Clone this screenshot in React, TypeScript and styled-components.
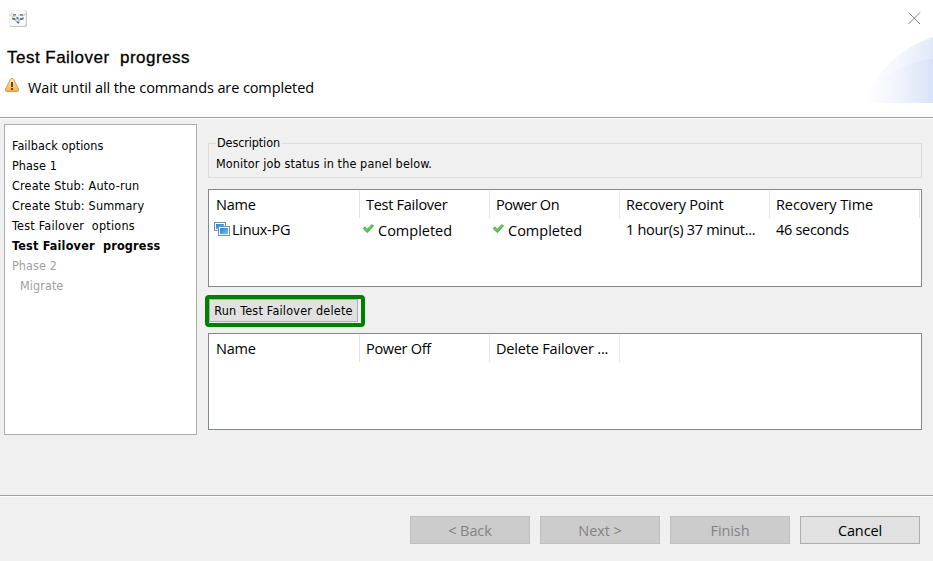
import React from 'react';
import styled, { createGlobalStyle } from 'styled-components';

const ui = '"Open Sans", "Noto Sans", sans-serif';
const dialog = '"DejaVu Sans Condensed", "DejaVu Sans", sans-serif';

const GlobalStyle = createGlobalStyle`
  * { box-sizing: border-box; }
  body { margin: 0; background: #f0f0f0; }
`;

const Window = styled.div`
  width: 933px;
  height: 561px;
  display: flex;
  flex-direction: column;
  background: #f0f0f0;
  color: #000;
  overflow: hidden;
  white-space: pre;
`;

const Header = styled.header`
  position: relative;
  height: 117px;
  background: #fff;
  display: flex;
  flex-direction: column;
`;

const TitleBar = styled.div`
  height: 36px;
  padding: 10px 12px 0 9px;
  display: flex;
  justify-content: space-between;
  svg { display: block; }
`;

const Title = styled.h1`
  margin: 11px 0 0 7px;
  font: 400 17px/22px "Liberation Sans", Arial, sans-serif;
  letter-spacing: 0.48px;
  -webkit-text-stroke: 0.3px #000;
`;

const Message = styled.div`
  display: flex;
  margin: 8px 0 0 5px;
  font: 14.5px/22px ${ui};
  letter-spacing: -0.1px;
  svg { display: block; margin: 1px 9px 0 0; }
`;

const Banner = styled.svg`
  position: absolute;
  right: 0;
  top: 36px;
`;

const Rule = styled.div`
  height: 2px;
  flex: none;
  background: #fff;
  border-top: 1px solid #a0a0a0;
`;

const Body = styled.main`
  height: 376px;
  padding: 5px 11px 0 4px;
  display: flex;
  gap: 11px;
`;

const Steps = styled.ul`
  width: 193px;
  height: 311px;
  margin: 0;
  padding: 11px 7px;
  list-style: none;
  background: #fff;
  border: 1px solid #abadb3;
  font: 12.5px/20px ${dialog};
`;

const Step = styled.li<{ $state?: 'active' | 'disabled'; $indent?: boolean; $ls?: number }>`
  font-weight: ${p => (p.$state === 'active' ? 700 : 400)};
  color: ${p => (p.$state === 'disabled' ? '#a0a0a0' : '#000')};
  padding-left: ${p => (p.$indent ? 8 : 0)}px;
  letter-spacing: ${p => p.$ls ?? 0.08}px;
`;

const Content = styled.section`
  flex: 1;
  display: flex;
  flex-direction: column;
  align-items: flex-start;
`;

const Group = styled.fieldset`
  width: 714px;
  height: 43px;
  margin: 11px 0 0;
  padding: 0 7px;
  border: 1px solid #dcdcdc;
  font: 12.5px/16px ${dialog};
`;

const Legend = styled.legend`
  padding: 0 1px;
  letter-spacing: -0.1px;
`;

const GroupText = styled.div`
  margin-top: 5px;
  letter-spacing: 0.12px;
`;

const Table = styled.div`
  width: 714px;
  height: 98px;
  padding-top: 1px;
  background: #fff;
  border: 1px solid #828790;
  font: 14.5px/28px ${ui};
`;

const FirstTable = styled(Table)`
  margin-top: 11px;
`;

const SecondTable = styled(Table)`
  height: 97px;
  margin-top: 6px;
`;

const Row = styled.div`
  display: flex;
`;

const HeadCell = styled.div<{ $w: number; $ls?: number }>`
  width: ${p => p.$w}px;
  height: 27px;
  padding-left: 6px;
  border-right: 1px solid #e5e5e5;
  letter-spacing: ${p => p.$ls ?? 0}px;
  &:first-child { padding-left: 7px; }
`;

const Cell = styled.div<{ $w: number; $icon?: boolean; $drop?: number; $ls?: number }>`
  width: ${p => p.$w}px;
  height: 24px;
  display: flex;
  padding-left: ${p => (p.$icon ? 2 : 6)}px;
  line-height: 24px;
  letter-spacing: ${p => p.$ls ?? 0}px;
  svg { display: block; flex: none; margin-top: -1px; }
  span { margin-top: ${p => p.$drop ?? 0}px; }
  &:first-child { padding-left: 3px; }
`;

const Highlight = styled.div`
  width: 160px;
  height: 32px;
  margin: 8px 0 0 -3px;
  border: 4px solid #008000;
  border-radius: 4px;
`;

const RunButton = styled.button`
  display: block;
  width: 149px;
  height: 23px;
  margin: 0;
  padding: 0;
  background: #e1e1e1;
  border: 1px solid #adadad;
  font: 12.5px/20px ${dialog};
  letter-spacing: 0.22px;
  white-space: pre;
  color: #000;
`;

const Footer = styled.footer`
  display: flex;
  justify-content: flex-end;
  gap: 10px;
  padding: 19px 13px 0 0;
`;

const FooterButton = styled.button`
  width: 120px;
  height: 28px;
  padding: 2px 0 0;
  background: #e1e1e1;
  border: 1px solid #adadad;
  font: 14.5px/24px ${ui};
  letter-spacing: -0.1px;
  color: #000;
  &:disabled {
    background: #ccc;
    border-color: #bfbfbf;
    color: #838383;
  }
`;

const AppIcon = () => (
  <svg width="19" height="18" viewBox="0 0 19 18">
    <rect x="0.5" y="0.5" width="17.5" height="16.5" rx="2" fill="#b9b9b9" />
    <rect x="0" y="0" width="17" height="16" rx="2" fill="#fafafa" stroke="#e2e2e2" strokeWidth=".6" />
    <path d="M.5 4.500q2.500 3.500 7 1.500M9.500 4.500q4 2.500 7-.5M2 3l3 2M7 9q4 2 8-2" fill="none" stroke="#d9d3a0" strokeWidth="1.200" />
    <path d="M4 4.800h3M11 4.800h3" fill="none" stroke="#3b7296" strokeWidth="1.300" />
    <path d="M3 8.300l3.500 1M11 9.300l3.500-1M7.500 7.500l2 1M8 11.500l2 1.500" fill="none" stroke="#3b7296" strokeWidth="1.800" />
    <path d="M6 10.500l2 1 3-1" fill="none" stroke="#8fb5c4" />
  </svg>
);

const CloseIcon = () => (
  <svg width="13" height="15" viewBox="0 0 13 15">
    <path d="M.5 2.500l11.500 11.500M12 2.500L.5 14" fill="none" stroke="#868686" />
  </svg>
);

const WarningIcon = () => (
  <svg width="14" height="16" viewBox="0 0 14 16">
    <defs>
      <linearGradient id="warn" x2="0" y2="1">
        <stop offset="0" stopColor="#fff0c0" />
        <stop offset="1" stopColor="#f9ad3c" />
      </linearGradient>
    </defs>
    <path d="M7 .5q1.300 0 1.800 1.200l4.500 9q.8 2.800-1 2.800H1.700q-1.800 0-1-2.800l4.500-9q.5-1.200 1.800-1.200z" fill="url(#warn)" stroke="#cf9a4e" />
    <path d="M7 4v5M7 10v2" stroke="#6b4410" strokeWidth="2" />
  </svg>
);

const MachineIcon = () => (
  <svg width="20" height="24" viewBox="0 0 20 24">
    <defs>
      <linearGradient id="screen" x2="1" y2="1">
        <stop offset="0" stopColor="#1b86dc" />
        <stop offset="1" stopColor="#6fc0f8" />
      </linearGradient>
    </defs>
    <rect x="2.500" y="5.500" width="11" height="8" fill="#fff" stroke="#7590a8" />
    <rect x="4" y="7" width="8" height="5" fill="url(#screen)" />
    <rect x="6.500" y="9.500" width="11" height="9" fill="#fff" stroke="#7590a8" />
    <rect x="8" y="11" width="8" height="6" fill="url(#screen)" />
  </svg>
);

const CheckIcon = () => (
  <svg width="16" height="24" viewBox="0 0 16 24">
    <path d="M1 11.500l2-1.700 2.200 2.200 4.700-4.500 1.800 1.300-6.300 7z" fill="#52b850" stroke="#369c3c" strokeWidth=".5" />
    <path d="M2.200 11.300l3 2 5-5" fill="none" stroke="#8bdc7c" strokeWidth=".7" />
  </svg>
);

export default function App() {
  return (
    <>
      <GlobalStyle />
      <Window>
        <Header>
          <Banner width="72" height="67" viewBox="0 0 72 67">
            <defs>
              <linearGradient id="fade"><stop offset="0" stopColor="#fff" /><stop offset=".4" stopColor="#f7f9fe" /><stop offset="1" stopColor="#e5ecfa" /></linearGradient>
              <linearGradient id="fade2"><stop offset="0" stopColor="#fff" stopOpacity="0" /><stop offset="1" stopColor="#d9e3f7" /></linearGradient>
            </defs>
            <path d="M0 67Q28 14 72 1v66z" fill="url(#fade)" />
            <path d="M34 42Q46 10 72 2v65H20z" fill="url(#fade2)" opacity=".35" />
            <path d="M0 67Q34 25 72 23v44z" fill="url(#fade2)" />
          </Banner>
          <TitleBar><AppIcon /><CloseIcon /></TitleBar>
          <Title>{'Test Failover  progress'}</Title>
          <Message><WarningIcon />Wait until all the commands are completed</Message>
        </Header>
        <Rule />
        <Body>
          <Steps>
            <Step>Failback options</Step>
            <Step>Phase 1</Step>
            <Step $ls={0.19}>Create Stub: Auto-run</Step>
            <Step $ls={0.19}>Create Stub: Summary</Step>
            <Step $ls={0.24}>{'Test Failover  options'}</Step>
            <Step $state="active" $ls={0.2}>{'Test Failover  progress'}</Step>
            <Step $state="disabled">Phase 2</Step>
            <Step $state="disabled" $indent>Migrate</Step>
          </Steps>
          <Content>
            <Group>
              <Legend>Description</Legend>
              <GroupText>Monitor job status in the panel below.</GroupText>
            </Group>
            <FirstTable>
              <Row>
                <HeadCell $w={151} $ls={-0.2}>Name</HeadCell>
                <HeadCell $w={130} $ls={-0.27}>Test Failover</HeadCell>
                <HeadCell $w={130} $ls={-0.45}>Power On</HeadCell>
                <HeadCell $w={150} $ls={-0.2}>Recovery Point</HeadCell>
                <HeadCell $w={150} $ls={-0.1}>Recovery Time</HeadCell>
              </Row>
              <Row>
                <Cell $w={151} $icon $ls={-0.3}><MachineIcon /><span>Linux-PG</span></Cell>
                <Cell $w={130} $icon $drop={1}><CheckIcon /><span>Completed</span></Cell>
                <Cell $w={130} $icon $drop={1}><CheckIcon /><span>Completed</span></Cell>
                <Cell $w={150} $ls={-0.3}>1 hour(s) 37 minut...</Cell>
                <Cell $w={150} $ls={-0.3}>46 seconds</Cell>
              </Row>
            </FirstTable>
            <Highlight><RunButton>Run Test Failover delete</RunButton></Highlight>
            <SecondTable>
              <Row>
                <HeadCell $w={151} $ls={-0.2}>Name</HeadCell>
                <HeadCell $w={130} $ls={-0.3}>Power Off</HeadCell>
                <HeadCell $w={130} $ls={-0.18}>Delete Failover ...</HeadCell>
              </Row>
            </SecondTable>
          </Content>
        </Body>
        <Rule />
        <Footer>
          <FooterButton disabled>&lt; Back</FooterButton>
          <FooterButton disabled>Next &gt;</FooterButton>
          <FooterButton disabled>Finish</FooterButton>
          <FooterButton>Cancel</FooterButton>
        </Footer>
      </Window>
    </>
  );
}
